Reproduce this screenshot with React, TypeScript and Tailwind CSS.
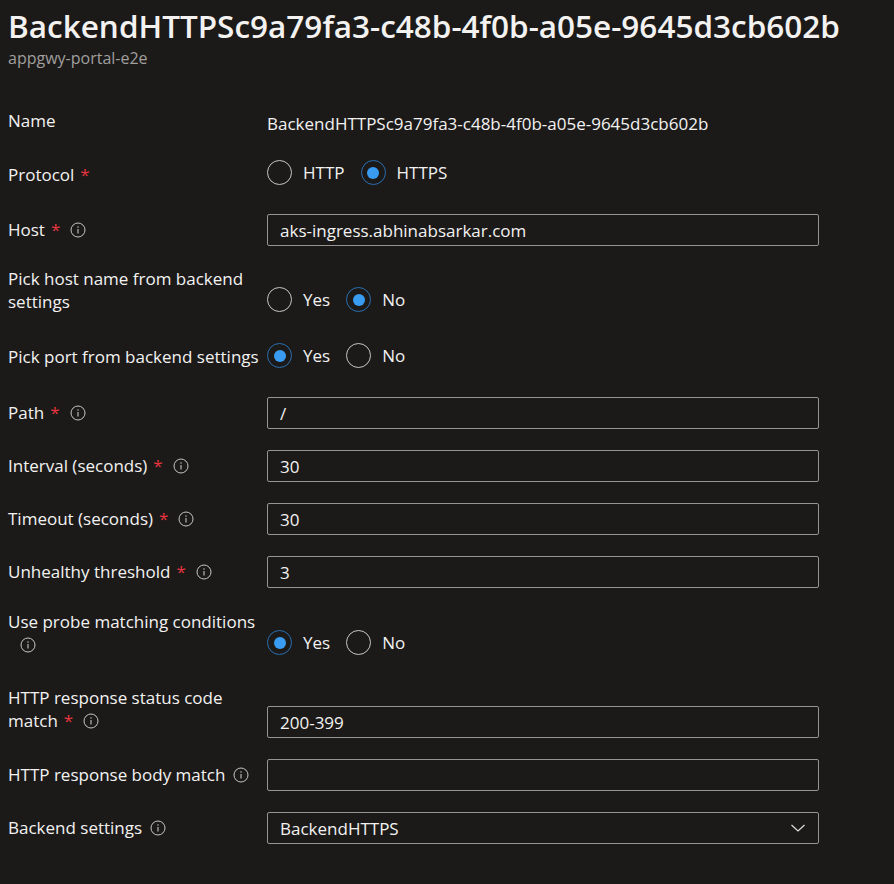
import React from "react";

const font = { fontFamily: '"Open Sans", "Noto Sans", sans-serif' };

function Info() {
  return (
    <svg width="16" height="16" viewBox="0 0 16 16" className="inline-block shrink-0">
      <circle cx="8" cy="8" r="7" fill="none" stroke="#c8c6c4" strokeWidth="1" />
      <line x1="8" y1="7" x2="8" y2="11.5" stroke="#c8c6c4" strokeWidth="1.1" />
      <circle cx="8" cy="4.9" r="0.75" fill="#c8c6c4" />
    </svg>
  );
}

function Req() {
  return <span className="text-[#e8343f] ml-[6px]">*</span>;
}

function Radio({ checked, label }: { checked: boolean; label: string }) {
  return (
    <div className="flex items-center mr-[16px]">
      {checked ? (
        <span className="w-[25px] h-[25px] rounded-full border border-[#2a6fb0] flex items-center justify-center">
          <span className="w-[12px] h-[12px] rounded-full bg-[#3a9cf0]" />
        </span>
      ) : (
        <span className="w-[25px] h-[25px] rounded-full border border-[#c8c6c4]" />
      )}
      <span className="ml-[11px] text-[#f3f2f1]">{label}</span>
    </div>
  );
}

function Input({ value }: { value: string }) {
  return (
    <div className="w-[552px] h-[32px] border border-[#979593] rounded-[2px] flex items-center px-[12px] text-[#f3f2f1]">
      {value}
    </div>
  );
}

export default function App() {
  return (
    <div className="w-[894px] h-[884px] bg-[#1b1a19] text-[#f3f2f1] overflow-hidden" style={font}>
      <div className="pl-[8px] pt-[5px]">
        <div className="text-[31.5px] leading-[42px] font-semibold text-[#f3f2f1] whitespace-nowrap">
          BackendHTTPSc9a79fa3-c48b-4f0b-a05e-9645d3cb602b
        </div>
        <div className="mt-[1px] text-[16px] leading-[20px] text-[#a19f9d]">appgwy-portal-e2e</div>
      </div>

      <div className="pl-[8px] text-[17px] leading-[23px]">
        {/* Name */}
        <div className="flex items-start mt-[41px]">
          <div className="w-[259px]">Name</div>
          <div className="mt-[3px] whitespace-nowrap">BackendHTTPSc9a79fa3-c48b-4f0b-a05e-9645d3cb602b</div>
        </div>
        {/* Protocol */}
        <div className="flex items-start mt-[25px]">
          <div className="w-[259px] mt-[3px]">
            Protocol
            <Req />
          </div>
          <div className="flex">
            <Radio checked={false} label="HTTP" />
            <Radio checked={true} label="HTTPS" />
          </div>
        </div>
        {/* Host */}
        <div className="flex items-start mt-[28px]">
          <div className="w-[259px] mt-[4px] flex items-center">
            Host
            <Req />
            <span className="ml-[10px] flex"><Info /></span>
          </div>
          <Input value="aks-ingress.abhinabsarkar.com" />
        </div>
        {/* Pick host */}
        <div className="flex items-start mt-[21px]">
          <div className="w-[259px]">
            Pick host name from backend
            <br />
            settings
          </div>
          <div className="flex mt-[20px]">
            <Radio checked={false} label="Yes" />
            <Radio checked={true} label="No" />
          </div>
        </div>
        {/* Pick port */}
        <div className="flex items-start mt-[30px]">
          <div className="w-[259px] mt-[2px] whitespace-nowrap">Pick port from backend settings</div>
          <div className="flex">
            <Radio checked={true} label="Yes" />
            <Radio checked={false} label="No" />
          </div>
        </div>
        {/* Path */}
        <div className="flex items-start mt-[29px]">
          <div className="w-[259px] mt-[4px] flex items-center">
            Path
            <Req />
            <span className="ml-[10px] flex"><Info /></span>
          </div>
          <Input value="/" />
        </div>
        {/* Interval */}
        <div className="flex items-start mt-[21px]">
          <div className="w-[259px] mt-[4px] flex items-center">
            Interval (seconds)
            <Req />
            <span className="ml-[10px] flex"><Info /></span>
          </div>
          <Input value="30" />
        </div>
        {/* Timeout */}
        <div className="flex items-start mt-[21px]">
          <div className="w-[259px] mt-[4px] flex items-center">
            Timeout (seconds)
            <Req />
            <span className="ml-[10px] flex"><Info /></span>
          </div>
          <Input value="30" />
        </div>
        {/* Unhealthy */}
        <div className="flex items-start mt-[21px]">
          <div className="w-[259px] mt-[4px] flex items-center">
            Unhealthy threshold
            <Req />
            <span className="ml-[10px] flex"><Info /></span>
          </div>
          <Input value="3" />
        </div>
        {/* Use probe */}
        <div className="flex items-start mt-[22px]">
          <div className="w-[259px]">
            Use probe matching conditions
            <div className="pl-[12px] h-[23px] flex items-center"><Info /></div>
          </div>
          <div className="flex mt-[20px]">
            <Radio checked={true} label="Yes" />
            <Radio checked={false} label="No" />
          </div>
        </div>
        {/* HTTP status */}
        <div className="flex items-start mt-[30px]">
          <div className="w-[259px]">
            HTTP response status code
            <div className="flex items-center">
              match
              <Req />
              <span className="ml-[10px] flex"><Info /></span>
            </div>
          </div>
          <div className="mt-[20px]">
            <Input value="200-399" />
          </div>
        </div>
        {/* Body */}
        <div className="flex items-start mt-[21px]">
          <div className="w-[259px] mt-[4px] flex items-center">
            HTTP response body match
            <span className="ml-[8px] flex"><Info /></span>
          </div>
          <Input value="" />
        </div>
        {/* Backend settings */}
        <div className="flex items-start mt-[21px]">
          <div className="w-[259px] mt-[4px] flex items-center">
            Backend settings
            <span className="ml-[8px] flex"><Info /></span>
          </div>
          <div className="w-[552px] h-[32px] border border-[#979593] rounded-[2px] flex items-center justify-between pl-[12px] pr-[12px] text-[#f3f2f1]">
            <span>BackendHTTPS</span>
            <svg width="16" height="16" viewBox="0 0 16 16">
              <path d="M1.5 5 L8 11 L14.5 5" fill="none" stroke="#e1dfdd" strokeWidth="1.2" />
            </svg>
          </div>
        </div>
      </div>
    </div>
  );
}
